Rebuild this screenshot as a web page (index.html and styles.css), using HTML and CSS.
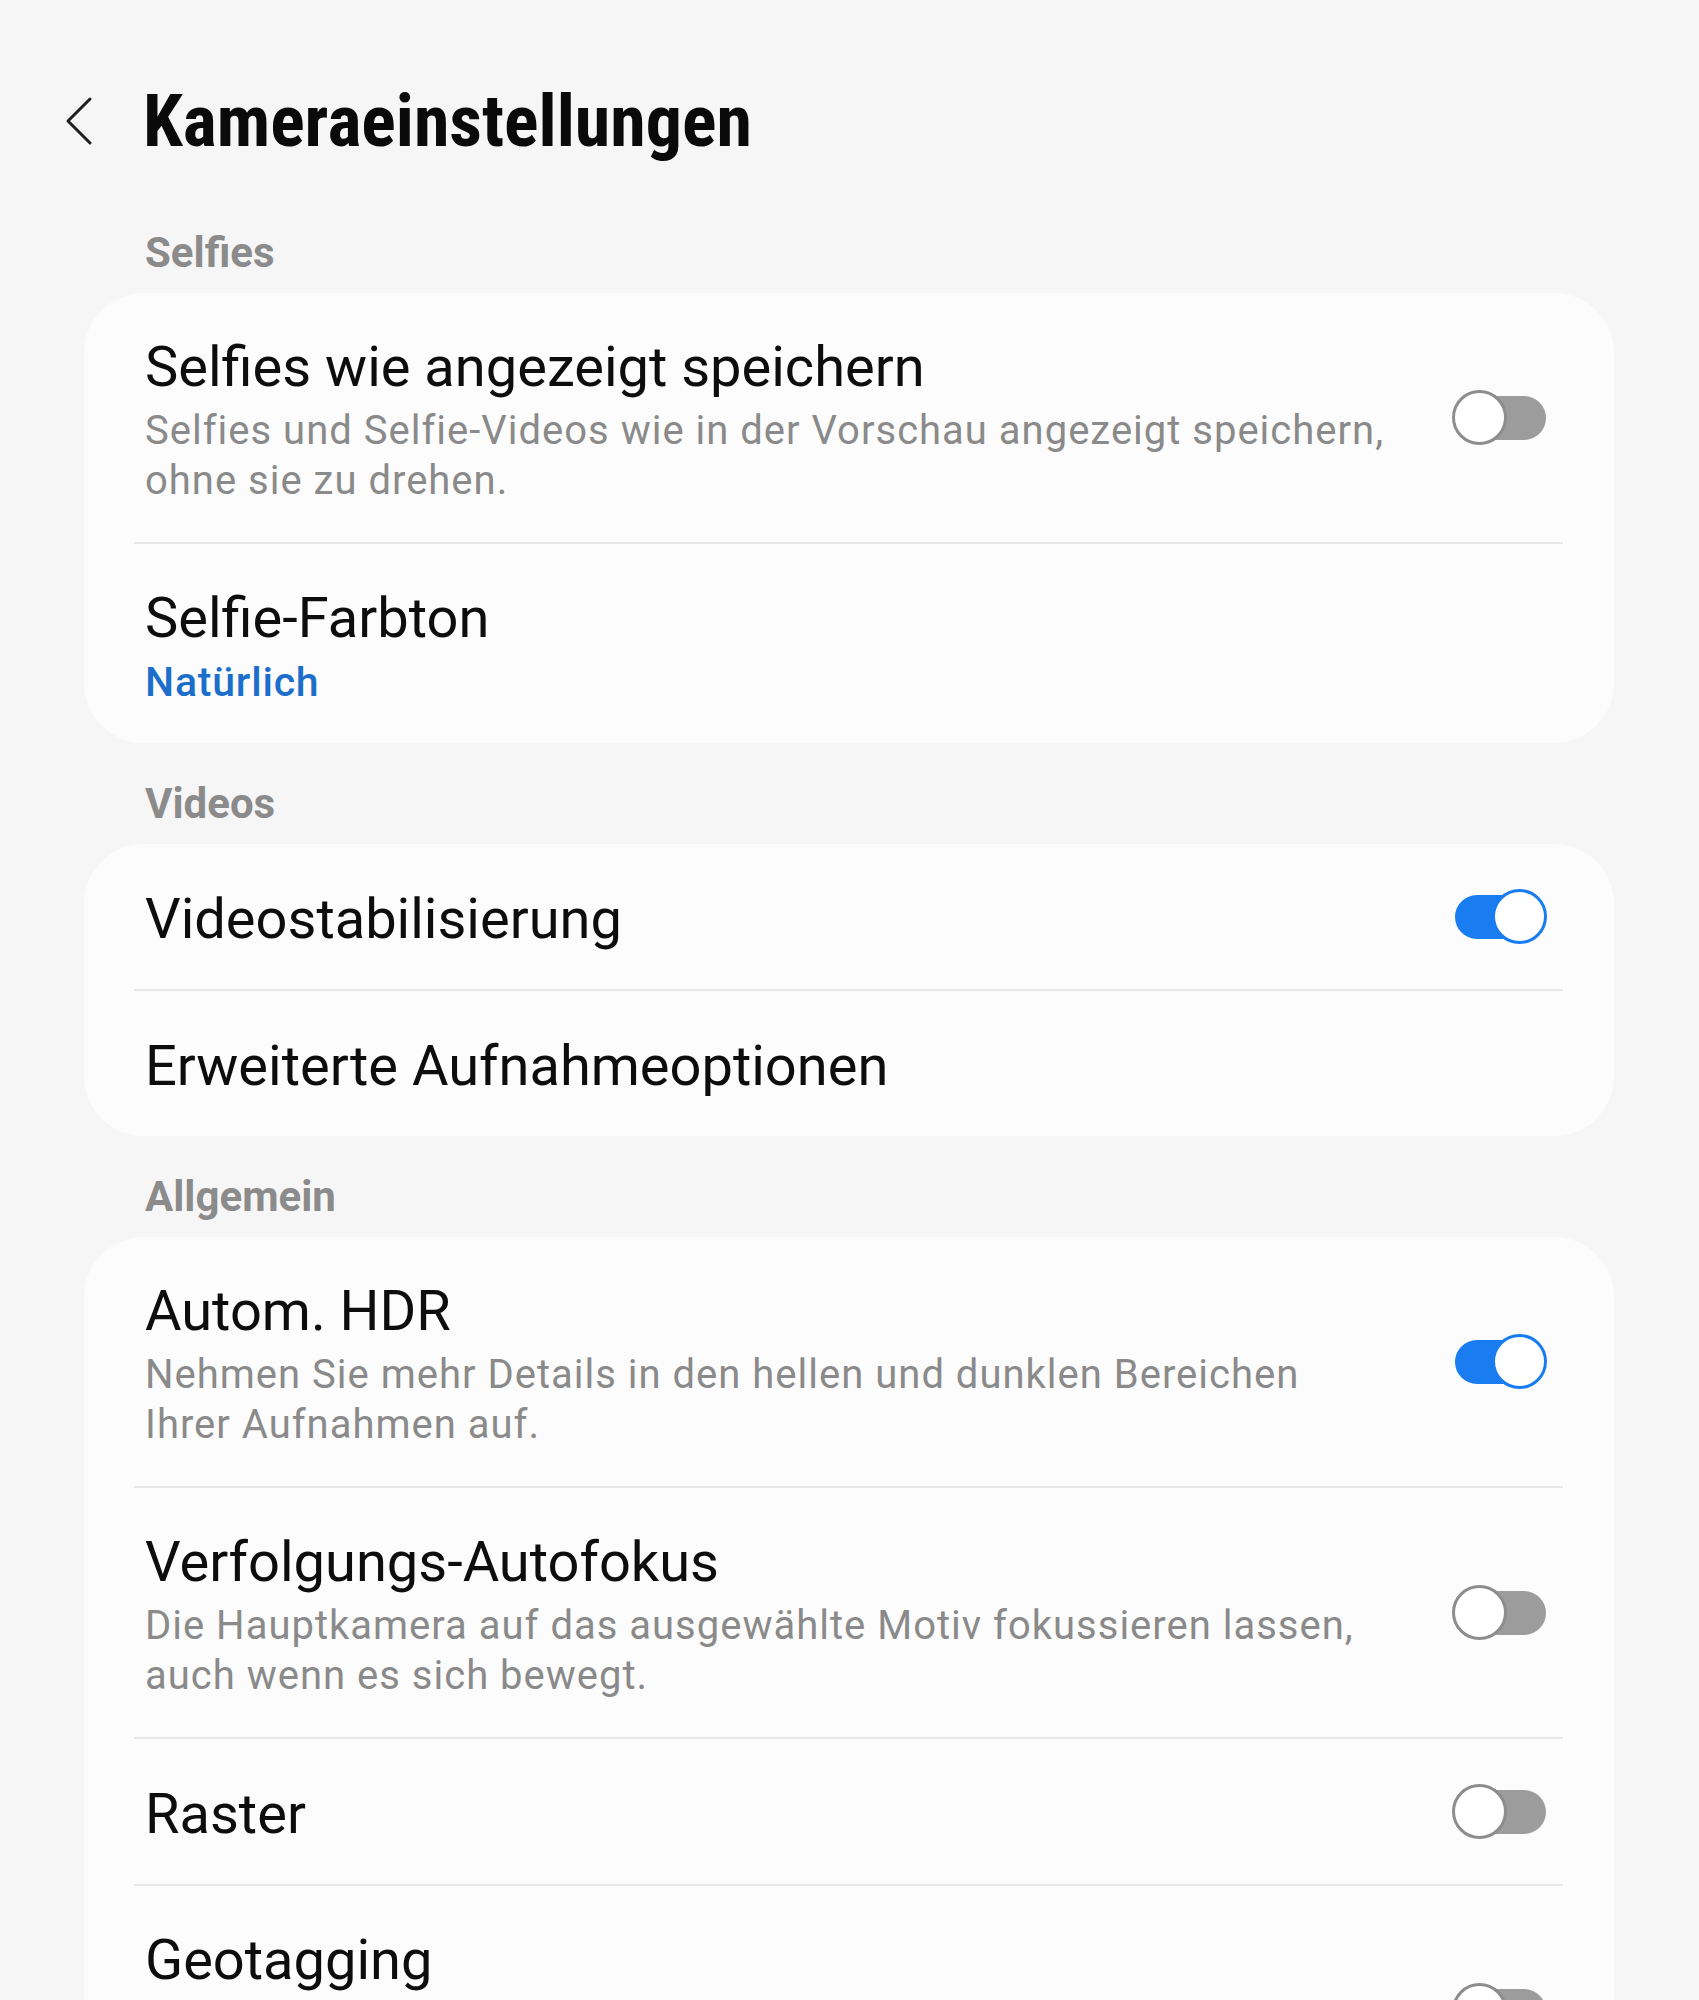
FILE: index.html
```html
<!DOCTYPE html>
<html lang="de">
<head>
<meta charset="utf-8">
<title>Kameraeinstellungen</title>
<link rel="stylesheet" href="styles.css">
</head>
<body>
<div class="page">
  <header class="topbar">
    <span class="back">
      <svg width="30" height="50" viewBox="0 0 30 50"><polyline points="26,3 4,25 26,47" fill="none" stroke="#1e1e1e" stroke-width="3" stroke-linecap="round" stroke-linejoin="round"/></svg>
    </span>
    <h1 class="title">Kameraeinstellungen</h1>
  </header>

  <div class="section-head">Selfies</div>
  <section class="card">
    <div class="row">
      <div class="text">
        <div class="label">Selfies wie angezeigt speichern</div>
        <div class="sub">Selfies und Selfie-Videos wie in der Vorschau angezeigt speichern,<br>ohne sie zu drehen.</div>
      </div>
      <div class="toggle"><span class="track"></span><span class="thumb"></span></div>
    </div>
    <div class="divider"></div>
    <div class="row">
      <div class="text">
        <div class="label">Selfie-Farbton</div>
        <div class="value">Natürlich</div>
      </div>
    </div>
  </section>

  <div class="section-head">Videos</div>
  <section class="card">
    <div class="row single">
      <div class="text"><div class="label">Videostabilisierung</div></div>
      <div class="toggle on"><span class="track"></span><span class="thumb"></span></div>
    </div>
    <div class="divider"></div>
    <div class="row single">
      <div class="text"><div class="label">Erweiterte Aufnahmeoptionen</div></div>
    </div>
  </section>

  <div class="section-head">Allgemein</div>
  <section class="card">
    <div class="row">
      <div class="text">
        <div class="label">Autom. HDR</div>
        <div class="sub">Nehmen Sie mehr Details in den hellen und dunklen Bereichen<br>Ihrer Aufnahmen auf.</div>
      </div>
      <div class="toggle on"><span class="track"></span><span class="thumb"></span></div>
    </div>
    <div class="divider"></div>
    <div class="row">
      <div class="text">
        <div class="label">Verfolgungs-Autofokus</div>
        <div class="sub">Die Hauptkamera auf das ausgewählte Motiv fokussieren lassen,<br>auch wenn es sich bewegt.</div>
      </div>
      <div class="toggle"><span class="track"></span><span class="thumb"></span></div>
    </div>
    <div class="divider"></div>
    <div class="row single">
      <div class="text"><div class="label">Raster</div></div>
      <div class="toggle"><span class="track"></span><span class="thumb"></span></div>
    </div>
    <div class="divider"></div>
    <div class="row">
      <div class="text">
        <div class="label">Geotagging</div>
        <div class="sub sub-empty"></div>
      </div>
      <div class="toggle"><span class="track"></span><span class="thumb"></span></div>
    </div>
  </section>
</div>
</body>
</html>
```
FILE: styles.css
```css
html, body {
  margin: 0;
  padding: 0;
  background: #f6f6f6;
}
body {
  font-family: Roboto, "Noto Sans", "Liberation Sans", sans-serif;
  color: #0d0d0d;
}
.page {
  padding: 0 85px 40px 84px;
}
.topbar {
  display: flex;
  align-items: center;
  padding: 82px 0 30px 0;
}
.back {
  display: flex;
  width: 30px;
  height: 50px;
  margin-left: -20px;
  margin-right: 49px;
  margin-top: -3px;
}
.title {
  margin: 0;
  font-family: "Roboto Condensed", Roboto, sans-serif;
  font-weight: 700;
  font-size: 72px;
  line-height: 80px;
  color: #0a0a0a;
}
.section-head {
  padding: 36px 0 15px 61px;
  font-size: 42px;
  line-height: 50px;
  font-weight: 700;
  color: #8b8b8b;
}
.card {
  background: #fcfcfc;
  border-radius: 60px;
  overflow: hidden;
}
.row {
  display: flex;
  align-items: center;
  padding: 41px 67px 36px 61px;
}
.row.single {
  padding-top: 42px;
  padding-bottom: 37px;
}
.text {
  flex: 1;
  min-width: 0;
}
.label {
  font-size: 56px;
  line-height: 66px;
  color: #0d0d0d;
  white-space: nowrap;
}
.sub {
  margin-top: 6px;
  font-size: 40px;
  line-height: 50px;
  letter-spacing: 1px;
  color: #8a8a8a;
}
.sub-empty {
  height: 100px;
}
.value {
  margin-top: 6px;
  font-size: 41px;
  line-height: 50px;
  letter-spacing: 0.8px;
  font-weight: 500;
  color: #1b6fcb;
}
.divider {
  height: 2px;
  margin: 0 51px 0 50px;
  background: #e8e8e8;
}
.toggle {
  position: relative;
  flex: none;
  width: 95px;
  height: 55px;
  margin-left: 30px;
  margin-top: -6px;
}
.track {
  position: absolute;
  left: 3px;
  right: 1px;
  top: 6px;
  height: 44px;
  border-radius: 22px;
  background: #9c9c9c;
}
.thumb {
  position: absolute;
  left: 0;
  top: 0;
  width: 55px;
  height: 55px;
  box-sizing: border-box;
  border: 3px solid #8d8d8d;
  border-radius: 50%;
  background: #ffffff;
}
.toggle.on .track {
  background: #1a7cf1;
}
.toggle.on .thumb {
  left: auto;
  right: 0;
  border-color: #1a7cf1;
}
```
